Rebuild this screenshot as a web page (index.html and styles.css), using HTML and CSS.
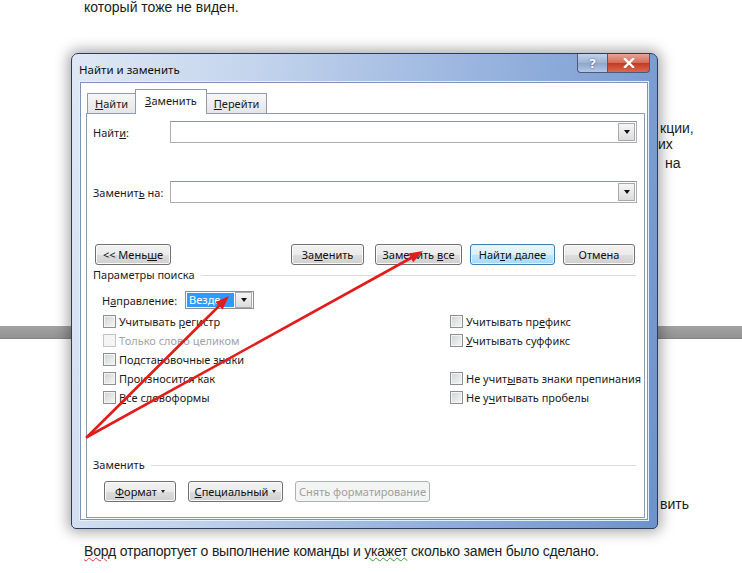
FILE: index.html
```html
<!DOCTYPE html>
<html lang="ru">
<head>
    <meta charset="UTF-8">
    <meta name="viewport" content="width=device-width, initial-scale=1.0">
    <title>Найти и заменить</title>
    <link rel="stylesheet" href="styles.css">
</head>
<body>
    <!-- документ под диалогом -->
    <div class="doc">
        <p class="doc-line first">который тоже не виден.</p>
        <div class="doc-tail">
            <p>кции,</p>
            <p class="tail-ih">их</p>
            <p class="tail-na">на</p>
        </div>
        <div class="doc-rule"></div>
        <div class="doc-tail low">
            <p>вить</p>
        </div>
        <p class="doc-line last"><span class="typo">Ворд</span> отрапортует о выполнение команды и <span class="grammar">укажет</span> сколько замен было сделано.</p>
    </div>

    <div class="dialog">
        <div class="titlebar">
            <span class="title">Найти и заменить</span>
            <div class="caption-btns">
                <span class="cap cap-help">?</span>
                <span class="cap cap-close">
                    <svg width="12" height="10" viewBox="0 0 12 10"><path d="M2 1 L10 9 M10 1 L2 9" stroke="#fff" stroke-width="2.4" stroke-linecap="square"/></svg>
                </span>
            </div>
        </div>

        <div class="client">
            <div class="tabs">
                <span class="tab"><u>Н</u>айти</span>
                <span class="tab tab-active"><u>З</u>аменить</span>
                <span class="tab"><u>П</u>ерейти</span>
            </div>

            <div class="panel">
                <div class="field">
                    <label class="field-label">Найт<u>и</u>:</label>
                    <div class="combo"><span class="combo-drop"><i class="tri"></i></span></div>
                </div>
                <div class="field field-second">
                    <label class="field-label">Заменит<u>ь</u> на:</label>
                    <div class="combo"><span class="combo-drop"><i class="tri"></i></span></div>
                </div>

                <div class="btn-row">
                    <button class="btn w-less"><span>&lt;&lt; Мень<u>ш</u>е</span></button>
                    <span class="grow"></span>
                    <button class="btn w-replace"><span>За<u>м</u>енить</span></button>
                    <button class="btn w-all"><span>Заменить <u>в</u>се</span></button>
                    <button class="btn btn-default w-next"><span>Най<u>т</u>и далее</span></button>
                    <button class="btn w-cancel"><span>Отмена</span></button>
                </div>

                <div class="group-label"><span>Параметры поиска</span></div>

                <div class="direction">
                    <span>Н<u>а</u>правление:</span>
                    <div class="select">
                        <span class="select-value">Везде</span>
                        <span class="select-drop"><i class="tri"></i></span>
                    </div>
                </div>

                <div class="options">
                    <div class="opt"><i class="check"></i><span>Учитывать <u>р</u>егистр</span></div>
                    <div class="opt"><i class="check"></i><span>Учитывать пр<u>е</u>фикс</span></div>

                    <div class="opt disabled"><i class="check"></i><span>Только слово целиком</span></div>
                    <div class="opt"><i class="check"></i><span><u>У</u>читывать суффикс</span></div>

                    <div class="opt"><i class="check"></i><span>Подстановочные знаки</span></div>
                    <div class="opt"></div>

                    <div class="opt"><i class="check"></i><span>Произносится как</span></div>
                    <div class="opt"><i class="check"></i><span>Не учит<u>ы</u>вать знаки препинания</span></div>

                    <div class="opt"><i class="check"></i><span><u>В</u>се словоформы</span></div>
                    <div class="opt"><i class="check"></i><span>Не у<u>ч</u>итывать пробелы</span></div>
                </div>

                <div class="group-label group-replace"><span>Заменить</span></div>

                <div class="fmt-row">
                    <button class="btn w-format"><span><u>Ф</u>ормат</span><i class="mini-tri"></i></button>
                    <button class="btn w-special"><span><u>С</u>пециальный</span><i class="mini-tri"></i></button>
                    <button class="btn btn-disabled w-clear"><span>Снять форматирование</span></button>
                </div>
            </div>
        </div>
    </div>

    <!-- красные стрелки поверх -->
    <svg class="arrows" width="742" height="573" viewBox="0 0 742 573">
        <g stroke="#e21b1b" stroke-width="2.6" stroke-linecap="round" fill="none">
            <line x1="87" y1="437" x2="219" y2="306"/>
            <line x1="87" y1="437" x2="411" y2="258"/>
        </g>
        <g fill="#e21b1b">
            <polygon points="229,296 222.6,309.4 215.6,302.3"/>
            <polygon points="423,251 413.2,262.2 408.3,253.4"/>
        </g>
    </svg>
</body>
</html>
```
FILE: styles.css
```css
html, body {
    margin: 0;
    padding: 0;
}
body {
    width: 742px;
    height: 573px;
    overflow: hidden;
    position: relative;
    background: #fff;
    font-family: "Noto Sans", "Liberation Sans", sans-serif;
    font-size: 11px;
    color: #1b1b1b;
}

/* документ */
.doc {
    padding-left: 84px;
    font-family: "Liberation Sans", Arial, sans-serif;
    font-size: 14px;
    color: #1c1c1c;
}
.doc p {
    margin: 0;
    line-height: 16px;
    white-space: nowrap;
}
.doc-line.first {
    margin-top: -1px;
}
.doc-tail {
    margin-left: 576px;
    margin-top: 105px;
}
.doc-tail .tail-ih {
    margin-left: -2px;
}
.doc-tail .tail-na {
    margin-top: 3px;
    margin-left: 5px;
}
.doc-tail.low {
    margin-top: 157px;
}
.doc-rule {
    margin-top: 155px;
    margin-left: -84px;
    height: 12px;
    background: linear-gradient(#a3a3a3, #929292);
    border-bottom: 1px solid #858585;
}
.doc-line.last {
    margin-top: 31px;
    letter-spacing: -0.2px;
}
.typo {
    text-decoration: underline wavy #e03030;
    text-decoration-thickness: 1px;
}
.grammar {
    text-decoration: underline wavy #3a9a3a;
    text-decoration-thickness: 1px;
}

/* окно */
.dialog {
    position: absolute;
    left: 71px;
    top: 53px;
    width: 585px;
    height: 474px;
    border: 1px solid #2b3d5e;
    border-radius: 7px 7px 5px 5px;
    background: linear-gradient(100deg, #dfe8f5 0%, #c3d4ec 28%, #9ab5df 60%, #6d92cb 100%);
    box-shadow: 0 0 14px 3px rgba(0, 0, 0, 0.35);
    display: flex;
    flex-direction: column;
}
.titlebar {
    height: 28px;
    display: flex;
    align-items: flex-start;
    justify-content: space-between;
    padding-left: 7px;
}
.title {
    margin-top: 8px;
    font-size: 11.5px;
    color: #111;
}
.caption-btns {
    display: flex;
    margin-right: 7px;
}
.cap {
    height: 18px;
    display: flex;
    align-items: center;
    justify-content: center;
    border: 1px solid #4a5a78;
    border-top: none;
}
.cap-help {
    width: 29px;
    border-radius: 0 0 0 4px;
    background: linear-gradient(#c3d2e8, #9db2d2 50%, #8ea6cb 51%, #b4c8e6);
    color: #fff;
    font-weight: bold;
    font-size: 13px;
    text-shadow: 0 0 2px #34496e;
}
.cap-close {
    width: 41px;
    border-left: none;
    border-radius: 0 0 4px 0;
    background: linear-gradient(#e8a595, #d46a55 50%, #c23a22 51%, #d96a4e);
}

.client {
    flex: 1;
    margin: 0 9px 8px 8px;
    background: #fff;
    border: 1px solid #7d93bb;
    box-shadow: 0 0 0 1px #e6eef9;
    padding: 7px 2px 1px 5px;
    display: flex;
    flex-direction: column;
}

/* вкладки */
.tabs {
    display: flex;
    align-items: flex-end;
    padding-left: 1px;
    height: 23px;
    position: relative;
    z-index: 1;
}
.tab {
    height: 19px;
    line-height: 19px;
    padding: 0 7px;
    border: 1px solid #8e9ab0;
    border-bottom: none;
    background: linear-gradient(#f7f7f7, #e5e5e5);
    margin-right: -1px;
}
.tab-active {
    line-height: 21px;
    padding: 0 9px;
    background: #fff;
    position: relative;
    margin-bottom: -1px;
    height: 24px;
}
.panel {
    flex: 1;
    border: 1px solid #8e9ab0;
    padding: 0 7px 0 6px;
    display: flex;
    flex-direction: column;
}

/* поля */
.field {
    display: flex;
    align-items: center;
    margin-top: 8px;
    height: 20px;
}
.field-second {
    margin-top: 40px;
}
.field-label {
    width: 77px;
}
.combo {
    flex: 1;
    height: 18px;
    border: 1px solid #abadb3;
    border-top-color: #8f939c;
    display: flex;
    justify-content: flex-end;
    padding: 1px;
}
.combo-drop, .select-drop {
    width: 15px;
    border: 1px solid #a9a9a9;
    background: linear-gradient(#f6f6f6, #dcdcdc);
    display: flex;
    align-items: center;
    justify-content: center;
}
.tri {
    width: 0;
    height: 0;
    border-left: 3.5px solid transparent;
    border-right: 3.5px solid transparent;
    border-top: 4px solid #111;
}

/* кнопки */
.btn-row {
    display: flex;
    margin-top: 42px;
    padding: 0 2px;
    gap: 8px;
}
.grow {
    flex: 1;
}
.btn {
    height: 21px;
    padding: 0;
    font: inherit;
    color: #111;
    border: 1px solid #707070;
    border-radius: 3px;
    background: linear-gradient(#f2f2f2, #ebebeb 50%, #dddddd 51%, #cfcfcf);
    box-shadow: inset 0 0 0 1px #fafafa;
    display: flex;
    align-items: center;
    justify-content: center;
}
.btn-default {
    border-color: #3c7fb1;
    background: linear-gradient(#eaf6fd, #d9f0fc 50%, #bee6fd 51%, #a7d9f5);
    box-shadow: inset 0 0 0 1px #def3fc;
}
.btn-disabled {
    color: #a0a0a0;
    border-color: #adb2b5;
    background: #f4f4f4;
    box-shadow: none;
}
.w-less { width: 76px; }
.w-replace { width: 73px; margin-right: 3px; }
.w-all { width: 87px; }
.w-next { width: 85px; }
.w-cancel { width: 72px; }
.w-format { width: 72px; }
.w-special { width: 95px; }
.w-clear { width: 135px; }

.mini-tri {
    display: inline-block;
    margin-left: 4px;
    border-left: 2.5px solid transparent;
    border-right: 2.5px solid transparent;
    border-top: 3px solid #222;
}

/* группы */
.group-label {
    margin-top: 3px;
    height: 14px;
    line-height: 14px;
    display: flex;
    align-items: center;
    gap: 6px;
}
.group-label::after {
    content: "";
    flex: 1;
    border-top: 1px solid #dcdcdc;
    margin-right: 1px;
}
.group-replace {
    margin-top: 51px;
}

.direction {
    margin-top: 9px;
    margin-left: 9px;
    display: flex;
    align-items: center;
    gap: 8px;
    height: 18px;
}
.select {
    width: 65px;
    height: 16px;
    border: 1px solid #8c8f96;
    padding: 0 1px;
    display: flex;
    align-items: center;
}
.select-value {
    flex: 1;
    height: 14px;
    line-height: 14px;
    background: #3399ff;
    color: #fff;
    padding-left: 2px;
    margin-right: 1px;
}
.select-drop {
    height: 14px;
}

/* флажки */
.options {
    margin-top: 3px;
    margin-left: 10px;
    display: grid;
    grid-template-columns: 347px 1fr;
    grid-auto-rows: 19px;
}
.opt {
    display: flex;
    align-items: center;
    white-space: nowrap;
}
.check {
    width: 11px;
    height: 11px;
    border: 1px solid #8e8f8f;
    background: linear-gradient(135deg, #cfd1d4, #f7f7f7);
    box-shadow: inset 0 0 0 1px #f4f4f4;
    margin-right: 3px;
    flex: none;
}
.opt.disabled {
    color: #a3a3a3;
}
.opt.disabled .check {
    border-color: #c5c5c5;
    background: #f5f5f5;
}

.fmt-row {
    margin-top: 9px;
    margin-left: 11px;
    display: flex;
    gap: 12px;
}

/* стрелки */
.arrows {
    position: absolute;
    left: 0;
    top: 0;
    pointer-events: none;
}
```
